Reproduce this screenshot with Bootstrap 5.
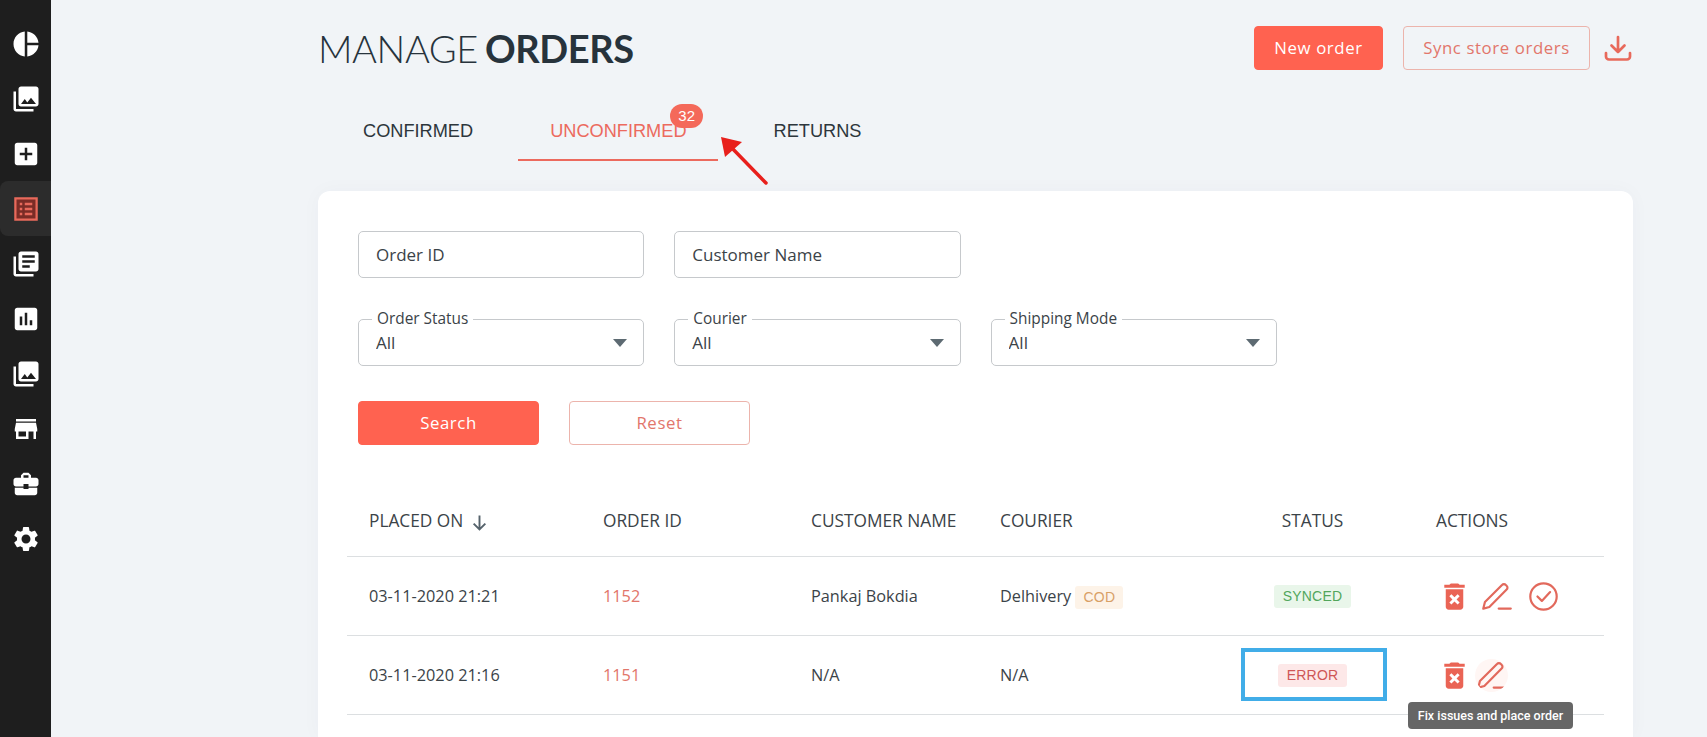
<!DOCTYPE html>
<html lang="en">
  <head>
    <meta charset="UTF-8" />
    <title>Manage Orders</title>
    <link href="https://cdn.jsdelivr.net/npm/bootstrap@5.3.0/dist/css/bootstrap.min.css" rel="stylesheet" />
    <style>
      html, body { height: 100%; }
      body { background: #f1f4f7; font-family: "Open Sans", sans-serif; color: #3b4348; overflow: hidden; }
      .page-wrap { position: relative; height: 737px; overflow: hidden; }
      .side-bar { width: 51px; background: #1e1e1e; padding-top: 16px; flex-shrink: 0; }
      .side-item { height: 55px; border-radius: 8px 0 0 8px; }
      .side-item svg { width: 30px; height: 30px; fill: #fff; }
      .side-item.is-active { background: #2c2c2c; }
      .main-area { padding: 0 74px 0 267px; min-width: 0; }
      .top-bar { height: 96px; }
      .page-title { font-family: Lato, sans-serif; font-weight: 300; font-size: 38px; line-height: 46px; color: #27333c; margin: 0; letter-spacing: -0.4px; word-spacing: -3px; }
      .page-title b { font-weight: 700; }
      .btn-coral, .btn-coral-line { font-size: 16.8px; letter-spacing: 0.6px; border-radius: 4px; height: 44px; padding: 0; }
      .btn-coral { background: #ff6250; border: 1px solid #ff6250; color: #fff; }
      .btn-coral-line { background: transparent; border: 1px solid #ecb4ac; color: #e2766b; }
      .btn-new { width: 129px; }
      .btn-sync { width: 187px; margin-left: 20px; }
      .download-icon { width: 30px; height: 30px; margin-left: 13px; fill: none; stroke: #e8695b; stroke-width: 2.7; stroke-linecap: round; stroke-linejoin: round; }
      .tab-row { height: 65px; margin-left: 13px; gap: 13px; font-family: "Liberation Sans", sans-serif; }
      .tab-row .nav-link { position: relative; font-size: 18.2px; line-height: 24px; color: #2d363c; padding: 23px 32px 16px; height: 65px; }
      .tab-row .nav-link.is-current { color: #ec6a5e; border-bottom: 2px solid #ec6a5e; padding-right: 31px; }
      .tab-row .tab-last { margin-left: 11px; }
      .tab-count { position: absolute; left: 152px; top: 8px; width: 33px; height: 24px; border-radius: 12px; background: #f4695a; color: #fff; font-size: 15px; line-height: 24px; text-align: center; }
      .orders-card { border: 0; border-radius: 12px 12px 0 0; height: 546px; margin-top: 30px; padding: 40px 29px 0; box-shadow: 0 0 20px rgba(40, 60, 90, 0.03); }
      .filter-row { padding-left: 11px; gap: 30px; }
      .filter-box { position: relative; width: 286.3px; }
      .filter-box .form-control, .filter-box .form-select { height: 47px; border: 1px solid #c6c9cc; border-radius: 5px; font-size: 17px; color: #3b4348; padding-left: 17px; box-shadow: none; }
      .filter-box .form-control::placeholder { color: #3b4348; opacity: 1; }
      .filter-box .form-select { padding-top: 1px; padding-bottom: 0; background-size: 14px 8px; background-position: right 16px center; background-image: url("data:image/svg+xml,%3csvg xmlns='http://www.w3.org/2000/svg' viewBox='0 0 14 8'%3e%3cpath fill='%235d6a72' d='M0 0h14L7 8z'/%3e%3c/svg%3e"); }
      .float-label { position: absolute; left: 14px; top: -10px; background: #fff; padding: 0 5px; font-size: 15.4px; line-height: 20px; color: #3b4348; }
      .filter-row.second-row { margin-top: 41px; }
      .action-row { margin-top: 35px; padding-left: 11px; gap: 30px; }
      .action-row .btn { width: 181px; }
      .order-table { table-layout: fixed; width: 1257px; margin: 41px 0 0; font-size: 16.3px; }
      .order-table th { font-weight: 400; font-size: 17.3px; height: 70px; vertical-align: middle; padding: 0 0 0 22px; color: #3b4348; white-space: nowrap; border-bottom: 1px solid #dcdfe1; }
      .order-table td { height: 79px; vertical-align: middle; padding: 1px 0 0 22px; color: #3b4348; border-bottom: 1px solid #dcdfe1; }
      .order-table .cell-center { text-align: center; padding: 0 3px 0 0; }
      .order-table a { color: #e2766b; text-decoration: none; }
      .sort-arrow { width: 17px; height: 17px; margin-left: 3px; fill: none; stroke: #55626b; stroke-width: 1.8; }
      .state-tag { display: inline-block; font-family: "Liberation Sans", sans-serif; font-size: 14px; line-height: 23px; padding: 0 9px; border-radius: 3px; letter-spacing: 0.2px; }
      .tag-cod { background: #fdf3e8; color: #d8a066; padding: 0 8px; }
      .tag-synced { background: #e9f6ea; color: #52a65c; }
      .tag-error { background: #fde8e8; color: #cf5656; }
      .act-head { padding-left: 24px; }
      .act-icons { position: relative; padding-left: 24.5px; }
      .act-icons svg { flex-shrink: 0; }
      .icon-trash { fill: #ea6455; width: 35px; height: 35px; }
      .icon-line { width: 33px; height: 33px; fill: none; stroke: #e2695c; stroke-width: 2; stroke-linecap: round; stroke-linejoin: round; }
      .gap-pen { margin-left: 8.5px; }
      .gap-check { margin-left: 14px; }
      .gap-pen-near { margin-left: 3.5px; }
      .pen-halo { background: #fff6f4; border-radius: 50%; }
      .fix-tip { position: absolute; left: -4px; top: 44px; width: 165px; height: 27px; border-radius: 4px; background: #666; color: #fff; font-family: Roboto, sans-serif; font-size: 12.5px; font-weight: 500; line-height: 27px; text-align: center; white-space: nowrap; z-index: 3; }
      .mark-box { position: absolute; left: 1241px; top: 648px; width: 146px; height: 53px; border: 4px solid #41ade8; z-index: 2; }
      .mark-arrow { position: absolute; left: 709px; top: 125px; z-index: 2; }
    </style>
  </head>
  <body>
    <div class="page-wrap d-flex">
      <div class="side-bar">
        <div class="side-item d-flex align-items-center justify-content-center"><svg viewBox="0 0 24 24"><path d="M11 2v20c-5.07-.5-9-4.79-9-10s3.93-9.5 9-10zm2.03 0v8.99H22c-.47-4.74-4.24-8.52-8.97-8.99zm0 11.01V22c4.74-.47 8.5-4.25 8.97-8.99h-8.97z"/></svg></div>
        <div class="side-item d-flex align-items-center justify-content-center"><svg viewBox="0 0 24 24"><path d="M22 16V4c0-1.1-.9-2-2-2H8c-1.1 0-2 .9-2 2v12c0 1.1.9 2 2 2h12c1.1 0 2-.9 2-2zm-11-4l2.03 2.71L16 11l4 5H8l3-4zM2 6v14c0 1.1.9 2 2 2h14v-2H4V6H2z"/></svg></div>
        <div class="side-item d-flex align-items-center justify-content-center"><svg viewBox="0 0 24 24"><path d="M19 3H5c-1.11 0-2 .9-2 2v14c0 1.1.89 2 2 2h14c1.1 0 2-.9 2-2V5c0-1.1-.9-2-2-2zm-2 10h-4v4h-2v-4H7v-2h4V7h2v4h4v2z"/></svg></div>
        <div class="side-item is-active d-flex align-items-center justify-content-center">
          <svg viewBox="0 0 24 24"><rect x="3.5" y="3.5" width="17" height="17" fill="#7a2c26" stroke="#e8695b" stroke-width="1.8"/><path fill="#e8695b" d="M7 7h2v2H7zm0 4h2v2H7zm0 4h2v2H7zM11 7h6v2h-6zm0 4h6v2h-6zm0 4h6v2h-6z"/></svg>
        </div>
        <div class="side-item d-flex align-items-center justify-content-center"><svg viewBox="0 0 24 24"><path d="M4 6H2v14c0 1.1.9 2 2 2h14v-2H4V6zm16-4H8c-1.1 0-2 .9-2 2v12c0 1.1.9 2 2 2h12c1.1 0 2-.9 2-2V4c0-1.1-.9-2-2-2zm-1 9H9V9h10v2zm-4 4H9v-2h6v2zm4-8H9V5h10v2z"/></svg></div>
        <div class="side-item d-flex align-items-center justify-content-center"><svg viewBox="0 0 24 24"><path d="M19 3H5c-1.1 0-2 .9-2 2v14c0 1.1.9 2 2 2h14c1.1 0 2-.9 2-2V5c0-1.1-.9-2-2-2zM9 17H7v-7h2v7zm4 0h-2V7h2v10zm4 0h-2v-4h2v4z"/></svg></div>
        <div class="side-item d-flex align-items-center justify-content-center"><svg viewBox="0 0 24 24"><path d="M22 16V4c0-1.1-.9-2-2-2H8c-1.1 0-2 .9-2 2v12c0 1.1.9 2 2 2h12c1.1 0 2-.9 2-2zm-11-4l2.03 2.71L16 11l4 5H8l3-4zM2 6v14c0 1.1.9 2 2 2h14v-2H4V6H2z"/></svg></div>
        <div class="side-item d-flex align-items-center justify-content-center"><svg viewBox="0 0 24 24"><path d="M20 4H4v2h16V4zm1 10v-2l-1-5H4l-1 5v2h1v6h10v-6h4v6h2v-6h1zm-9 4H6v-4h6v4z"/></svg></div>
        <div class="side-item d-flex align-items-center justify-content-center"><svg viewBox="0 0 24 24"><path d="M10 16v-1H3.01L3 19c0 1.11.89 2 2 2h14c1.11 0 2-.89 2-2v-4h-7v1h-4zm10-9h-4.01V5l-2-2h-4l-2 2v2H4c-1.1 0-2 .9-2 2v3c0 1.11.89 2 2 2h6v-2h4v2h6c1.1 0 2-.9 2-2V9c0-1.1-.9-2-2-2zm-6 0h-4V5h4v2z"/></svg></div>
        <div class="side-item d-flex align-items-center justify-content-center"><svg viewBox="0 0 24 24"><path d="M19.14 12.94c.04-.3.06-.61.06-.94 0-.32-.02-.64-.07-.94l2.03-1.58c.18-.14.23-.41.12-.61l-1.92-3.32c-.12-.22-.37-.29-.59-.22l-2.39.96c-.5-.38-1.03-.7-1.62-.94l-.36-2.54c-.04-.24-.24-.41-.48-.41h-3.84c-.24 0-.43.17-.47.41l-.36 2.54c-.59.24-1.13.57-1.62.94l-2.39-.96c-.22-.08-.47 0-.59.22L2.74 8.87c-.12.21-.08.47.12.61l2.03 1.58c-.05.3-.09.63-.09.94s.02.64.07.94l-2.03 1.58c-.18.14-.23.41-.12.61l1.92 3.32c.12.22.37.29.59.22l2.39-.96c.5.38 1.03.7 1.62.94l.36 2.54c.05.24.24.41.48.41h3.84c.24 0 .44-.17.47-.41l.36-2.54c.59-.24 1.13-.56 1.62-.94l2.39.96c.22.08.47 0 .59-.22l1.92-3.32c.12-.22.07-.47-.12-.61l-2.01-1.58zM12 15.6c-1.98 0-3.6-1.62-3.6-3.6s1.62-3.6 3.6-3.6 3.6 1.62 3.6 3.6-1.62 3.6-3.6 3.6z"/></svg></div>
      </div>

      <div class="main-area flex-grow-1">
        <div class="top-bar d-flex align-items-center">
          <h1 class="page-title flex-grow-1">MANAGE <b>ORDERS</b></h1>
          <button class="btn btn-coral btn-new">New order</button>
          <button class="btn btn-coral-line btn-sync">Sync store orders</button>
          <svg class="download-icon" viewBox="0 0 30 30"><path d="M15 4v15M8.500 12.500L15 19l6.500-6.500M3 20v3.500a3 3 0 0 0 3 3h18a3 3 0 0 0 3-3V20"/></svg>
        </div>

        <ul class="nav tab-row">
          <li class="nav-item"><a class="nav-link" href="#">CONFIRMED</a></li>
          <li class="nav-item"><a class="nav-link is-current" href="#">UNCONFIRMED<span class="tab-count">32</span></a></li>
          <li class="nav-item tab-last"><a class="nav-link" href="#">RETURNS</a></li>
        </ul>

        <div class="card orders-card">
          <div class="d-flex filter-row">
            <div class="filter-box"><input class="form-control" placeholder="Order ID" /></div>
            <div class="filter-box"><input class="form-control" placeholder="Customer Name" /></div>
          </div>
          <div class="d-flex filter-row second-row">
            <div class="filter-box">
              <span class="float-label">Order Status</span>
              <select class="form-select"><option>All</option></select>
            </div>
            <div class="filter-box">
              <span class="float-label">Courier</span>
              <select class="form-select"><option>All</option></select>
            </div>
            <div class="filter-box">
              <span class="float-label">Shipping Mode</span>
              <select class="form-select"><option>All</option></select>
            </div>
          </div>
          <div class="d-flex action-row">
            <button class="btn btn-coral">Search</button>
            <button class="btn btn-coral-line">Reset</button>
          </div>

          <table class="table order-table">
            <colgroup>
              <col style="width: 234px" /><col style="width: 208px" /><col style="width: 189px" /><col style="width: 260px" /><col style="width: 152px" /><col style="width: 214px" />
            </colgroup>
            <thead>
              <tr>
                <th>PLACED ON <svg class="sort-arrow" viewBox="0 0 16 16"><path d="M8 1.500v13M2.500 9L8 14.500 13.500 9"/></svg></th>
                <th>ORDER ID</th>
                <th>CUSTOMER NAME</th>
                <th>COURIER</th>
                <th class="cell-center">STATUS</th>
                <th><span class="act-head">ACTIONS</span></th>
              </tr>
            </thead>
            <tbody>
              <tr>
                <td>03-11-2020 21:21</td>
                <td><a href="#">1152</a></td>
                <td>Pankaj Bokdia</td>
                <td>Delhivery <span class="state-tag tag-cod">COD</span></td>
                <td class="cell-center"><span class="state-tag tag-synced">SYNCED</span></td>
                <td>
                  <div class="act-icons d-flex align-items-center">
                    <svg class="icon-trash" viewBox="0 0 24 24"><path d="M6 19c0 1.100.9 2 2 2h8c1.100 0 2-.9 2-2V7H6v12zm2.460-7.120l1.410-1.410L12 12.590l2.120-2.120 1.410 1.410L13.410 14l2.120 2.120-1.410 1.410L12 15.410l-2.120 2.120-1.410-1.410L10.590 14l-2.130-2.120zM15.500 4l-1-1h-5l-1 1H5v2h14V4z"/></svg>
                    <svg class="icon-line gap-pen" viewBox="0 0 30 30"><path d="M3 26l1.500-6L20 4.500a2.400 2.400 0 0 1 3.500 0l.7.700a2.400 2.400 0 0 1 0 3.500L8.500 24.500zM17 26h11"/></svg>
                    <svg class="icon-line gap-check" viewBox="0 0 30 30"><circle cx="15" cy="15" r="12"/><path d="M9.500 15l4 4 7.500-8"/></svg>
                  </div>
                </td>
              </tr>
              <tr>
                <td>03-11-2020 21:16</td>
                <td><a href="#">1151</a></td>
                <td>N/A</td>
                <td>N/A</td>
                <td class="cell-center"><span class="state-tag tag-error">ERROR</span></td>
                <td>
                  <div class="act-icons d-flex align-items-center">
                    <svg class="icon-trash" viewBox="0 0 24 24"><path d="M6 19c0 1.100.9 2 2 2h8c1.100 0 2-.9 2-2V7H6v12zm2.460-7.120l1.410-1.410L12 12.590l2.120-2.120 1.410 1.410L13.410 14l2.120 2.120-1.410 1.410L12 15.410l-2.120 2.120-1.410-1.410L10.590 14l-2.130-2.120zM15.500 4l-1-1h-5l-1 1H5v2h14V4z"/></svg>
                    <svg class="icon-line gap-pen-near pen-halo" viewBox="0 0 30 30"><path d="M3 26l1.500-6L20 4.500a2.400 2.400 0 0 1 3.500 0l.7.700a2.400 2.400 0 0 1 0 3.500L8.500 24.500zM17 26h11"/></svg>
                    <span class="fix-tip">Fix issues and place order</span>
                  </div>
                </td>
              </tr>
            </tbody>
          </table>
        </div>
      </div>

      <div class="mark-box"></div>
      <svg class="mark-arrow" width="70" height="70" viewBox="0 0 70 70">
        <path d="M57 58L20 20" stroke="#e8201c" stroke-width="3.500" stroke-linecap="round" fill="none"/>
        <path d="M12 12L33 17 16 32z" fill="#e8201c"/>
      </svg>
    </div>
    <script src="https://cdn.jsdelivr.net/npm/bootstrap@5.3.0/dist/js/bootstrap.bundle.min.js"></script>
  </body>
</html>
